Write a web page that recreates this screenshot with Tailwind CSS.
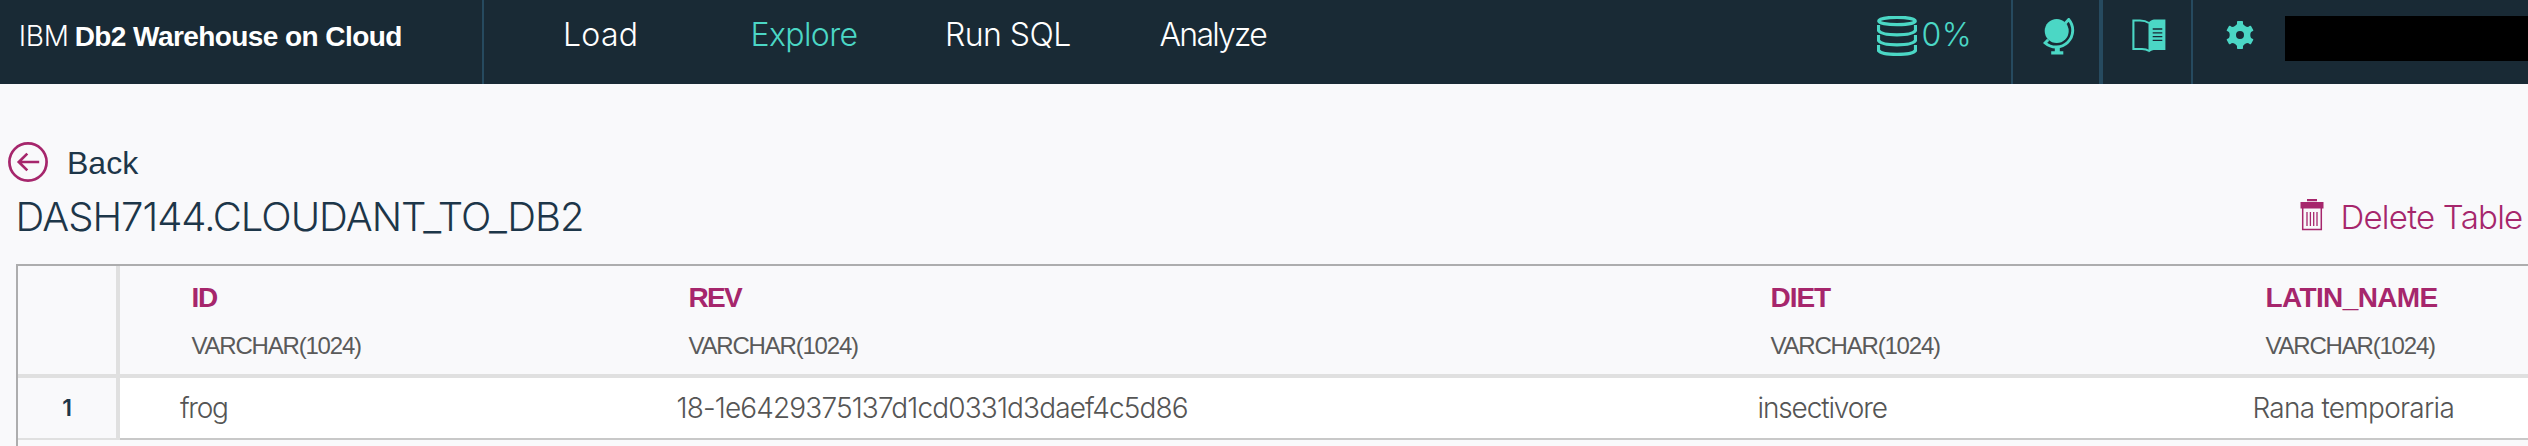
<!DOCTYPE html>
<html lang="en">
<head>
<meta charset="utf-8">
<title>IBM Db2 Warehouse on Cloud</title>
<script src="https://cdn.jsdelivr.net/npm/@tailwindcss/browser@4"></script>
</head>
<body class="h-[446px] overflow-hidden flex flex-col bg-[#f9f9fb] font-['Inter','Liberation_Sans',sans-serif] font-[350] text-[#1d3649] whitespace-nowrap">

<header class="flex h-[84px] shrink-0 items-start bg-[#192a35] text-white">
  <div class="flex h-full w-[484px] items-baseline border-r-2 border-[#264a5f] pl-[18.7px] text-[28px] leading-[72px]">
    <span class="w-[56px] font-light tracking-[-0.26px]">IBM</span>
    <span class="font-['Liberation_Sans',sans-serif] font-bold tracking-[-0.57px]">Db2 Warehouse on Cloud</span>
  </div>
  <nav class="flex w-[1393px] pl-[79px] text-[32px] leading-[69px]">
    <a class="w-[187.5px] tracking-[0.3px]">Load</a>
    <a class="w-[194.5px] tracking-[-0.6px] text-[#4bd7c5]">Explore</a>
    <a class="w-[214.5px] tracking-[-0.55px]">Run SQL</a>
    <a class="tracking-[-1.75px]">Analyze</a>
  </nav>
  <div class="flex h-full w-[136px] gap-[4.5px] border-r-2 border-[#264a5f] text-[32px] font-light leading-[70px] tracking-[0.6px] text-[#4bd7c5]">
    <svg class="mt-4 h-10 w-10 shrink-0" viewBox="0 0 40 40" fill="none" stroke="#4bd7c5" stroke-width="3.2">
      <ellipse cx="20" cy="5" rx="18.3" ry="3.7"/>
      <path d="M1.5 9v5.5C5 20.3 35 20.3 38.500 14.500V9M1.500 19v5.500C5 30.300 35 30.300 38.500 24.500V19M1.500 29v5.500C5 39.700 35 39.700 38.500 34.500V29"/>
    </svg>
    <span>0%</span>
  </div>
  <div class="h-full w-[90px] border-r-4 border-[#264a5f] pl-[30px] pt-[18px]">
    <svg class="h-[37px] w-[33px]" viewBox="0 0 33 37" fill="#4bd7c5">
      <circle cx="13.700" cy="13" r="12"/>
      <path d="M22.300 5.300L25.700 1.500A16.700 16.700 0 0 1 2.100 25L5.200 21.700" fill="none" stroke="#4bd7c5" stroke-width="2.900"/>
      <path d="M11.800 29.500h5v3.700h3.500v3.200H8.200v-3.200h3.600z"/>
    </svg>
  </div>
  <div class="h-full w-[90px] border-r-2 border-[#264a5f] pl-[29px] pt-[19px]">
    <svg class="h-[34px] w-[34px]" viewBox="0 0 34 34">
      <path d="M17 4C14 2 12 1.500 8 1.500H1.400V30H10C13.500 30 15 30.500 17 31.800" fill="none" stroke="#4bd7c5" stroke-width="2.100"/>
      <path d="M16.500 3.500C19 1 21 .500 24 .500h9.400V31H24c-3.500 0-5 .500-7 2.300l-.500-.300z" fill="#4bd7c5"/>
      <path d="M20.700 10h9.600M20.700 13.800h9.600M20.700 17.600h9.600M20.700 21.400h9.600" stroke="#192a35" stroke-width="1.300"/>
    </svg>
  </div>
  <div class="w-[92px] pl-[33px] pt-[21px]">
    <svg class="h-7 w-7" viewBox="-14 -14 28 28" fill="#4bd7c5">
      <circle r="7.200" fill="none" stroke="#4bd7c5" stroke-width="6.400"/>
      <path id="tooth" d="M-5 -8.500L-3 -11V-13.200Q-3 -14 -2.200 -14H2.200Q3 -14 3 -13.200V-11L5 -8.500z"/>
      <use href="#tooth" transform="rotate(60)"/>
      <use href="#tooth" transform="rotate(120)"/>
      <use href="#tooth" transform="rotate(180)"/>
      <use href="#tooth" transform="rotate(240)"/>
      <use href="#tooth" transform="rotate(300)"/>
    </svg>
  </div>
  <div class="mt-4 h-[45px] flex-1 bg-black"></div>
</header>

<main class="flex flex-1 flex-col pt-[58px]">
  <a class="flex h-10 items-center gap-[19px] pl-2">
    <svg class="h-10 w-10" viewBox="0 0 40 40" fill="none" stroke="#a6266c" stroke-width="2.700">
      <circle cx="20" cy="20" r="18.600"/>
      <path d="M31.200 20H11M19.300 11.600L10.800 20L19.300 28.400"/>
    </svg>
    <span class="pt-px font-['Liberation_Sans',sans-serif] text-[32px] font-normal leading-[42px]">Back</span>
  </a>
  <div class="flex h-[69px] items-center justify-between pl-[15.6px]">
    <h1 class="text-[40px] font-light leading-[69px] tracking-[-0.99px]">DASH7144.CLOUDANT_TO_DB2</h1>
    <a class="flex w-[228px] items-center text-[33px] font-light leading-[68px] tracking-[-0.76px] text-[#a6266c]">
      <svg class="mr-[16.500px] mb-1 h-8 w-6 shrink-0" viewBox="0 0 24 32" fill="#a6266c">
        <path d="M7 0h10v2.300H7zM.500 3h23v6.500H.500z"/>
        <path d="M2.700 9v21.500h18.600V9" fill="none" stroke="#a6266c" stroke-width="1.500"/>
        <path d="M7 13v14M10.400 13v14M13.700 13v14M17 13v14" stroke="#a6266c" stroke-width="1.300"/>
      </svg>
      <span>Delete Table</span>
    </a>
  </div>

  <div class="ml-4 mt-[13px] flex-1 border-l-2 border-t-2 border-[#adadae]">
    <div class="grid h-[112px] grid-cols-[102px_497px_1082px_495px_1fr] border-b-4 border-[#e0e0e0] font-['Liberation_Sans',sans-serif] text-2xl font-normal leading-[48px] text-[#5a5a5a]">
      <div class="border-r-4 border-[#e0e0e0]"></div>
      <div class="pl-[71.500px] pt-2">
        <div class="text-[28px] font-bold leading-[48px] tracking-[-1.180px] text-[#a6266c]">ID</div>
        <div class="tracking-[-1.200px]">VARCHAR(1024)</div>
      </div>
      <div class="pl-[71.500px] pt-2">
        <div class="text-[28px] font-bold leading-[48px] tracking-[-1.650px] text-[#a6266c]">REV</div>
        <div class="tracking-[-1.200px]">VARCHAR(1024)</div>
      </div>
      <div class="pl-[71.500px] pt-2">
        <div class="text-[28px] font-bold leading-[48px] tracking-[-1.060px] text-[#a6266c]">DIET</div>
        <div class="tracking-[-1.200px]">VARCHAR(1024)</div>
      </div>
      <div class="pl-[71.500px] pt-2">
        <div class="text-[28px] font-bold leading-[48px] tracking-[-0.630px] text-[#a6266c]">LATIN_NAME</div>
        <div class="tracking-[-1.200px]">VARCHAR(1024)</div>
      </div>
    </div>
    <div class="grid h-[62px] grid-cols-[102px_497px_1082px_495px_1fr] text-[28px] leading-[60px] text-[#555]">
      <div class="border-b-2 border-r-4 border-[#e0e0e0] text-center text-[23px] font-semibold text-[#1d3649]">1</div>
      <div class="border-b-2 border-[#c8c8c8] bg-white pl-[60px] tracking-[-1.280px]">frog</div>
      <div class="border-b-2 border-[#c8c8c8] bg-white pl-[59.500px] tracking-[-0.860px]">18-1e6429375137d1cd0331d3daef4c5d86</div>
      <div class="border-b-2 border-[#c8c8c8] bg-white pl-[58.500px] tracking-[-1.130px]">insectivore</div>
      <div class="border-b-2 border-[#c8c8c8] bg-white pl-[58.500px] tracking-[-0.740px]">Rana temporaria</div>
    </div>
  </div>
</main>
</body>
</html>
